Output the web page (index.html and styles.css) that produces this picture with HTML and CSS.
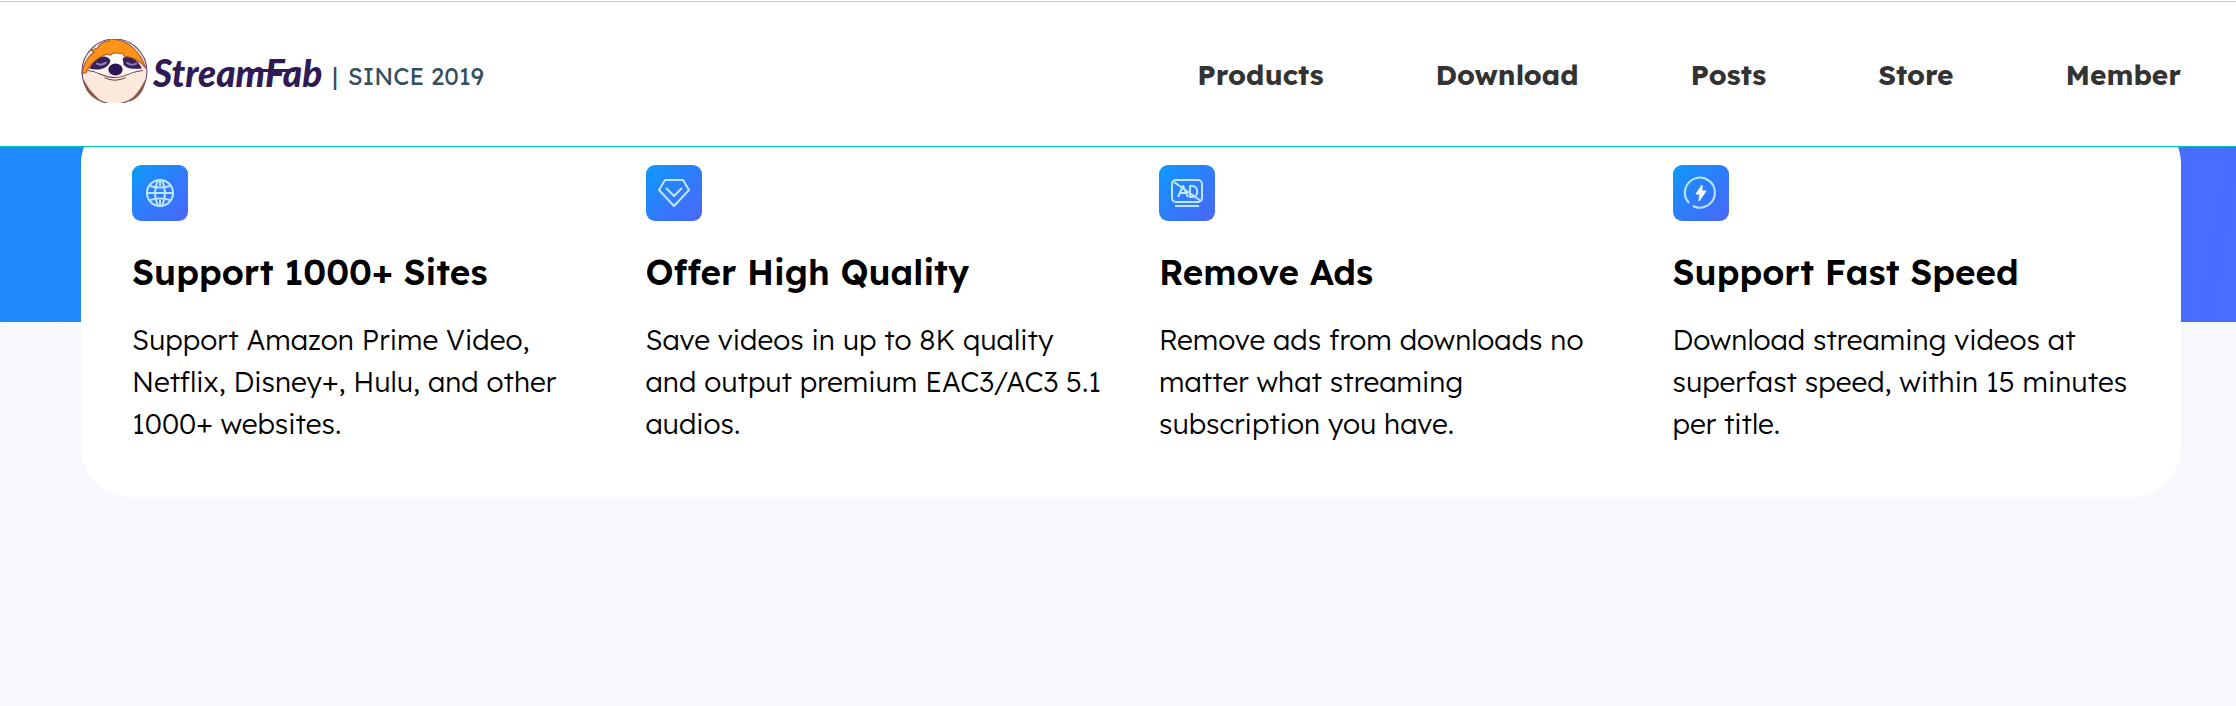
FILE: index.html
```html
<!DOCTYPE html>
<html lang="en">
<head>
<meta charset="utf-8">
<meta name="viewport" content="width=device-width, initial-scale=1">
<title>StreamFab</title>
<link rel="stylesheet" href="styles.css">
</head>
<body>
<header class="header">
  <a class="brand" href="#">
    <svg class="brand-mark" viewBox="1 0 66 63" aria-hidden="true">
      <circle cx="34" cy="32" r="32" fill="#fce9dc" stroke="#5b3f6d" stroke-width="1"/>
      <path d="M4 40C8 49 15 56 22 62C11 58 4 51 4 40Z" fill="#8b5a4a"/>
      <path d="M64 40C60 49 54 56 48 62C58 58 64 51 64 40Z" fill="#8b5a4a"/>
      <path d="M7 29C11 18 22 12 34 12S57 18 62 31C53 36 45 33 40 34L28 34C20 34 12 36 7 29Z" fill="#fff8f0"/>
      <path d="M27 14L41 14L39 27L29 27Z" fill="#fff"/>
      <path d="M11 26C16 16 27 15 30 21C29 29 18 32 9 29Z" fill="#38205b"/>
      <path d="M42 19C48 15 56 19 61 29C53 30 45 29 43 25Z" fill="#38205b"/>
      <path d="M16 24Q21 27 26 23M46 23Q50 27 56 24" fill="none" stroke="#8d80bd" stroke-width="2"/>
      <path d="M2 34C3 24 9 16 14 13L11 11L17 9C20 4 24 2 29 2L27 0C43-1 58 8 65 29C60 22 53 18 44 17C42 15 43 14 41 14C34 14 33 13 30 16L26 15C18 18 10 24 6 33Z" fill="#ff9318" stroke="#a35535" stroke-width="1"/>
      <ellipse cx="35" cy="30" rx="7" ry="6" fill="#291651"/>
      <path d="M8 31C18 32 23 38 34 38S49 32 62 31M24 38Q34 43 45 38" fill="none" stroke="#654451" stroke-width="1"/>
    </svg>
    <span class="brand-name">Stream<span class="brand-tail">Fab</span></span>
    <span class="brand-bar">|</span>
    <span class="brand-since">SINCE 2019</span>
  </a>
  <nav class="nav" aria-label="Main">
    <a href="#">Products</a>
    <a href="#">Download</a>
    <a href="#">Posts</a>
    <a href="#">Store</a>
    <a href="#">Member</a>
  </nav>
</header>
<main class="hero">
  <section class="features">
    <article class="feature">
      <svg class="feature-icon" viewBox="0 0 56 56" aria-hidden="true">
        <circle cx="28" cy="28" r="13"/>
        <path d="M15 28H41M18 21Q28 24 38 21M18 35Q28 32 38 35M28 15V21M28 35V41M26 15Q20 28 26 41M30 15Q36 28 30 41"/>
      </svg>
      <h2 class="feature-title">Support 1000+ Sites</h2>
      <p class="feature-text">Support Amazon Prime Video, Netflix, Disney+, Hulu, and other 1000+ websites.</p>
    </article>
    <article class="feature">
      <svg class="feature-icon" viewBox="0 0 56 56" aria-hidden="true">
        <path d="M19 15H37L43 25L28 41L13 25ZM20 23L28 31L36 23"/>
      </svg>
      <h2 class="feature-title">Offer High Quality</h2>
      <p class="feature-text">Save videos in up to 8K quality and output premium EAC3/AC3 5.1 audios.</p>
    </article>
    <article class="feature">
      <svg class="feature-icon" viewBox="0 0 56 56" aria-hidden="true">
        <rect x="13" y="15" width="30" height="22" rx="4"/>
        <path d="M16 41H40M15 17L42 36M19 32L24 21L29 32M21 28H27M31 21V32H33C40 32 40 21 33 21Z"/>
      </svg>
      <h2 class="feature-title">Remove Ads</h2>
      <p class="feature-text">Remove ads from downloads no matter what streaming subscription you have.</p>
    </article>
    <article class="feature">
      <svg class="feature-icon" viewBox="0 0 56 56" aria-hidden="true">
        <path d="M16 38A15 15 0 1 1 20 41"/>
        <path class="solid" d="M29 20L23 29H27L26 36L33 26H29Z"/>
      </svg>
      <h2 class="feature-title">Support Fast Speed</h2>
      <p class="feature-text">Download streaming videos at superfast speed, within 15 minutes per title.</p>
    </article>
  </section>
</main>
</body>
</html>
```
FILE: styles.css
```css
* { box-sizing: border-box; }

body {
  margin: 0;
  padding-top: 1px;
  background: #f7f8fc;
  color: #000;
  font-family: Lexend, Inter, sans-serif;
}

.header {
  position: sticky;
  top: 0;
  z-index: 1;
  display: flex;
  align-items: center;
  justify-content: space-between;
  height: 146px;
  padding: 0 55px 0 81px;
  background: #fff;
  border-top: 1px solid #ccc;
  border-bottom: 1px solid #00c4b3;
  box-shadow: 0 -1px #fff;
}

.brand {
  display: flex;
  align-items: center;
  padding-bottom: 6px;
  text-decoration: none;
}

.brand-mark {
  width: 67px;
  height: 64px;
}

.brand-name {
  padding: 4px 0 0 5px;
  color: #2f1a56;
  font: italic 900 37px/48px Lato, sans-serif;
}

.brand-tail {
  position: relative;
}

/* Crossbar that joins the m, F and a of the wordmark */
.brand-tail::before {
  content: "";
  position: absolute;
  top: 19px;
  left: -14px;
  width: 44px;
  height: 3px;
  background: #2f1a56;
}

.brand-bar,
.brand-since {
  padding: 9px 0 0 10px;
  color: #34505c;
  font-size: 24px;
  line-height: 36px;
}

.nav {
  display: flex;
  gap: 112px;
  padding-top: 2px;
}

.nav a {
  color: #333;
  font-size: 28px;
  font-weight: 700;
  line-height: 42px;
  text-decoration: none;
}

.hero {
  padding: 0 55px 0 81px;
  margin-top: -33px;
  background: linear-gradient(100deg, #1d8af8, #4a6cff) no-repeat 0 0 / 100% 208px;
}

.features {
  display: grid;
  grid-template-columns: repeat(4, minmax(0, 1fr));
  gap: 56px;
  padding: 51px 51px 52px;
  background: #fff;
  border-radius: 50px;
}

.feature-icon {
  display: block;
  width: 56px;
  height: 56px;
  border-radius: 9px;
  background: linear-gradient(135deg, #0b9bf8, #2f7dfc 50%, #4b66f8);
  fill: none;
  stroke: #bfe6ff;
  stroke-width: 2;
  stroke-linejoin: round;
}

.feature-icon .solid {
  fill: #fff;
  stroke: #fff;
  stroke-width: 1;
}

.feature-title {
  margin: 24px 0 20px;
  font-size: 35px;
  font-weight: 600;
  line-height: 54px;
}

.feature-text {
  margin: 0;
  font-size: 28px;
  font-weight: 300;
  line-height: 42px;
}
```
